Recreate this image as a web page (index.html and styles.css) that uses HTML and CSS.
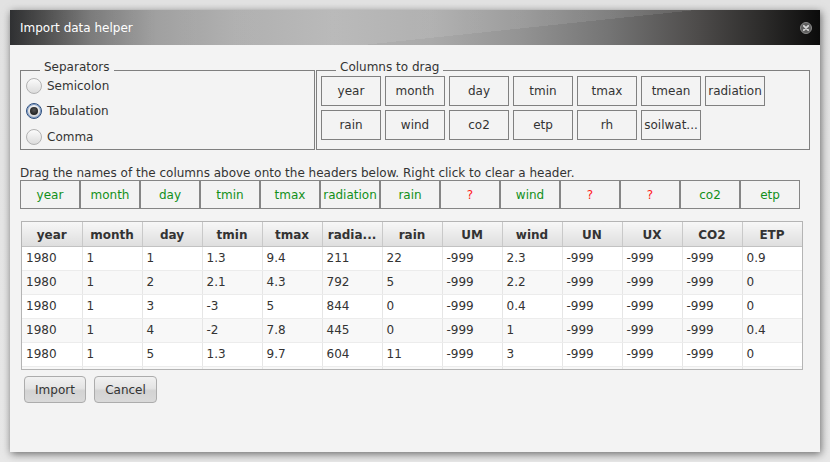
FILE: index.html
```html
<!DOCTYPE html>
<html>
<head>
<meta charset="utf-8">
<title>Import data helper</title>
<link rel="stylesheet" href="styles.css">
</head>
<body>
<div class="dialog">
  <div class="titlebar">
    <span class="title">Import data helper</span>
    <span class="close">
      <svg width="12" height="12" viewBox="0 0 12 12">
        <circle cx="6" cy="6" r="5.5" fill="#5e5e5e" stroke="#8a8a8a" stroke-width="1"/>
        <path d="M3.8 3.8 L8.2 8.2 M8.2 3.8 L3.8 8.2" stroke="#d8d8d8" stroke-width="1.8" stroke-linecap="round"/>
      </svg>
    </span>
  </div>
  <div class="content">
    <div class="groups">
      <div class="group sep">
        <span class="legend">Separators</span>
        <div class="radios">
          <label class="radio-row"><span class="radio"></span>Semicolon</label>
          <label class="radio-row"><span class="radio on"><span class="dot"></span></span>Tabulation</label>
          <label class="radio-row"><span class="radio"></span>Comma</label>
        </div>
      </div>
      <div class="group cols">
        <span class="legend">Columns to drag</span>
        <div class="chips">
          <div class="chip">year</div>
          <div class="chip">month</div>
          <div class="chip">day</div>
          <div class="chip">tmin</div>
          <div class="chip">tmax</div>
          <div class="chip">tmean</div>
          <div class="chip">radiation</div>
          <div class="chip">rain</div>
          <div class="chip">wind</div>
          <div class="chip">co2</div>
          <div class="chip">etp</div>
          <div class="chip">rh</div>
          <div class="chip">soilwat...</div>
        </div>
      </div>
    </div>
    <div class="hint">Drag the names of the columns above onto the headers below. Right click to clear a header.</div>
    <div class="targets">
      <div class="target ok">year</div>
      <div class="target ok">month</div>
      <div class="target ok">day</div>
      <div class="target ok">tmin</div>
      <div class="target ok">tmax</div>
      <div class="target ok">radiation</div>
      <div class="target ok">rain</div>
      <div class="target no">?</div>
      <div class="target ok">wind</div>
      <div class="target no">?</div>
      <div class="target no">?</div>
      <div class="target ok">co2</div>
      <div class="target ok">etp</div>
    </div>
    <div class="table-wrap">
      <table class="grid">
        <thead>
          <tr><th>year</th><th>month</th><th>day</th><th>tmin</th><th>tmax</th><th>radia...</th><th>rain</th><th>UM</th><th>wind</th><th>UN</th><th>UX</th><th>CO2</th><th>ETP</th></tr>
        </thead>
        <tbody>
          <tr><td>1980</td><td>1</td><td>1</td><td>1.3</td><td>9.4</td><td>211</td><td>22</td><td>-999</td><td>2.3</td><td>-999</td><td>-999</td><td>-999</td><td>0.9</td></tr>
          <tr><td>1980</td><td>1</td><td>2</td><td>2.1</td><td>4.3</td><td>792</td><td>5</td><td>-999</td><td>2.2</td><td>-999</td><td>-999</td><td>-999</td><td>0</td></tr>
          <tr><td>1980</td><td>1</td><td>3</td><td>-3</td><td>5</td><td>844</td><td>0</td><td>-999</td><td>0.4</td><td>-999</td><td>-999</td><td>-999</td><td>0</td></tr>
          <tr><td>1980</td><td>1</td><td>4</td><td>-2</td><td>7.8</td><td>445</td><td>0</td><td>-999</td><td>1</td><td>-999</td><td>-999</td><td>-999</td><td>0.4</td></tr>
          <tr><td>1980</td><td>1</td><td>5</td><td>1.3</td><td>9.7</td><td>604</td><td>11</td><td>-999</td><td>3</td><td>-999</td><td>-999</td><td>-999</td><td>0</td></tr>
          <tr><td></td><td></td><td></td><td></td><td></td><td></td><td></td><td></td><td></td><td></td><td></td><td></td><td></td></tr>
        </tbody>
      </table>
    </div>
    <div class="actions">
      <button class="btn import">Import</button>
      <button class="btn cancel">Cancel</button>
    </div>
  </div>
</div>
</body>
</html>
```
FILE: styles.css
```css
html, body {
  margin: 0;
  padding: 0;
}
body {
  width: 830px;
  height: 462px;
  overflow: hidden;
  background: linear-gradient(#e2e2e2, #e8e8e8);
  font-family: "DejaVu Sans", "Liberation Sans", sans-serif;
  font-size: 12px;
  color: #333;
  padding: 10px 0 0 10px;
  box-sizing: border-box;
}
.dialog {
  width: 810px;
  height: 442px;
  background: #f3f3f3;
  box-shadow: 1px 2px 8px rgba(0, 0, 0, 0.55);
  display: flex;
  flex-direction: column;
}
.titlebar {
  height: 35px;
  flex: none;
  display: flex;
  align-items: center;
  justify-content: space-between;
  padding: 0 10px 0 10px;
  background:
    linear-gradient(174deg, rgba(255,255,255,0.09) 0 60%, rgba(0,0,0,0) 60%),
    linear-gradient(to right, #1b1c1e 0%, #3b3b3b 4%, #6f6f6f 10%, #979797 18%, #a9a9a9 28%, #b3b3b3 40%, #aaaaaa 52%, #939393 63%, #747474 74%, #4d4b4a 85%, #2c2b2a 93%, #0b0b0b 100%);
}
.title {
  color: #ffffff;
  font-size: 12px;
  padding-top: 1px;
}
.close {
  display: flex;
  margin-right: -2px;
}
.content {
  padding: 25px 10px 0 10px;
  display: flex;
  flex-direction: column;
}
.groups {
  display: flex;
  height: 80px;
}
.group {
  border: 1px solid #7f7f7f;
  box-sizing: border-box;
  height: 80px;
  display: flex;
  flex-direction: column;
  align-items: flex-start;
}
.group.sep {
  width: 295px;
  margin-right: 1px;
}
.group.cols {
  width: 494px;
}
.legend {
  display: block;
  flex: none;
  line-height: 14px;
  height: 14px;
  margin: -11px 0 -3px 19px;
  padding: 0 4px;
  background: #f3f3f3;
}
.radios {
  padding: 2px 0 0 5px;
  display: flex;
  flex-direction: column;
}
.radio-row {
  height: 25.6px;
  display: flex;
  align-items: center;
  gap: 5px;
}
.radio {
  width: 16px;
  height: 16px;
  box-sizing: border-box;
  border-radius: 50%;
  border: 1px solid #b2b2b2;
  background: linear-gradient(#fbfbfb, #dcdcdc);
  display: flex;
  align-items: center;
  justify-content: center;
}
.radio.on {
  border: 1px solid #2a4c7c;
  box-shadow: inset 0 0 0 1px #7f9cc6;
  background: linear-gradient(#f4f4f4, #d4d4d4);
}
.dot {
  width: 8px;
  height: 8px;
  border-radius: 50%;
  background: radial-gradient(circle at 50% 40%, #555 0, #222 70%);
}
.chips {
  display: grid;
  grid-template-columns: repeat(7, 60px);
  grid-auto-rows: 30px;
  gap: 4px;
  padding: 5px 0 0 4px;
}
.chip {
  border: 1px solid #808080;
  display: flex;
  align-items: center;
  justify-content: center;
  font-size: 12px;
  color: #333;
  white-space: nowrap;
}
.hint {
  margin-top: 16px;
  line-height: 14px;
  height: 14px;
  font-size: 12px;
  color: #333;
}
.targets {
  margin-top: 0;
  display: flex;
  height: 29px;
}
.target {
  width: 60px;
  flex: none;
  box-sizing: border-box;
  border: 1px solid #858585;
  display: flex;
  align-items: center;
  justify-content: center;
  white-space: nowrap;
  padding-top: 1px;
}
.target.ok {
  color: #12901a;
}
.target.no {
  color: #ff1a1a;
}
.table-wrap {
  margin: 12px 0 0 1px;
  width: 782px;
  height: 149px;
  box-sizing: border-box;
  border: 1px solid #b4b4b4;
  overflow: hidden;
  background: #ffffff;
}
.grid {
  border-collapse: collapse;
  table-layout: fixed;
  width: 780px;
}
.grid th, .grid td {
  width: 60px;
  box-sizing: border-box;
  height: 24px;
  padding: 0 4px;
  white-space: nowrap;
  overflow: hidden;
  font-size: 12px;
  color: #333;
}
.grid th {
  font-weight: bold;
  text-align: center;
  background: linear-gradient(#f7f7f7, #dedede);
  border-right: 1px solid #c9c9c9;
  border-bottom: 1px solid #c2c2c2;
  height: 24px;
  padding-top: 3px;
}
.grid td {
  text-align: left;
  border-right: 1px solid #e6e6e6;
  border-bottom: 1px solid #ececec;
}
.grid tbody tr:nth-child(even) td {
  background: #f8f8f8;
}
.actions {
  margin: 6px 0 0 4px;
  display: flex;
  gap: 8px;
}
.btn {
  height: 27px;
  padding: 0;
  border: 1px solid #acacac;
  border-radius: 4px;
  background: linear-gradient(#f1f1f1 0%, #e4e4e4 45%, #d3d3d3 55%, #d9d9d9 100%);
  font-family: "DejaVu Sans", "Liberation Sans", sans-serif;
  font-size: 12px;
  color: #333;
}
.btn.import {
  width: 62px;
}
.btn.cancel {
  width: 63px;
}
```
